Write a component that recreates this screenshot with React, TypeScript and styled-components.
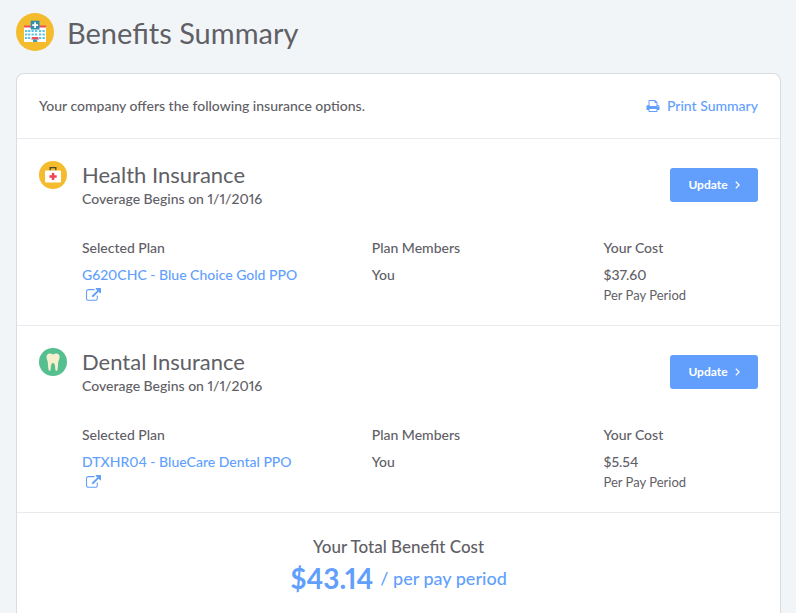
import React from 'react';
import styled, { createGlobalStyle } from 'styled-components';

const colors = {
  page: '#f2f5f8',
  text: '#5f6066',
  blue: '#629ffd',
  border: '#d9dce2',
  rule: '#e8eaed',
  yellow: '#f4bc2c',
  green: '#56bf90',
};

const GlobalStyle = createGlobalStyle`
  *, *::before, *::after { box-sizing: border-box; }
  body {
    margin: 0;
    background: ${colors.page};
    color: ${colors.text};
    font-family: Lato, "Open Sans", sans-serif;
    font-size: 14px;
    font-weight: 500;
    font-variant-numeric: proportional-nums;
    line-height: 20px;
  }
  h1, h2, h3, p, dl, dt, dd { margin: 0; font-weight: 500; }
  svg { display: block; flex: none; }
`;

const Page = styled.main`
  padding: 12px 15px 0 16px;
`;

const PageHeader = styled.header`
  display: flex;
  align-items: center;
  gap: 13px;
  height: 39px;
`;

const PageTitle = styled.h1`
  font-size: 29px;
  font-weight: 400;
  line-height: 36px;
  padding-top: 2px;
`;

const Card = styled.div`
  margin-top: 22px;
  background: #fff;
  border: 1px solid ${colors.border};
  border-bottom: 0;
  border-radius: 8px 8px 0 0;
`;

const Intro = styled.div`
  display: flex;
  align-items: center;
  justify-content: space-between;
  padding: 22px;
  border-bottom: 1px solid ${colors.rule};
`;

const Link = styled.a`
  display: inline-flex;
  align-items: center;
  gap: 7px;
  color: ${colors.blue};
  text-decoration: none;
`;

const PlanLink = styled.a`
  display: block;
  color: ${colors.blue};
  text-decoration: none;

  svg { margin: 3px 0 0 4px; }
`;

const Section = styled.section`
  display: grid;
  grid-template-columns: 28px 1fr;
  column-gap: 15px;
  padding: 22px 22px 20px;
  border-bottom: 1px solid ${colors.rule};
`;

const SectionHeader = styled.div`
  display: flex;
  justify-content: space-between;
  align-items: center;
`;

const SectionTitle = styled.h2`
  font-size: 22px;
  font-weight: 400;
  line-height: 28px;
`;

const UpdateButton = styled.button`
  display: flex;
  align-items: center;
  justify-content: center;
  gap: 7px;
  width: 88px;
  height: 34px;
  padding: 0;
  border: 0;
  border-radius: 3px;
  background: ${colors.blue};
  color: #fff;
  font: 700 12px/20px Lato, "Open Sans", sans-serif;
  cursor: pointer;
`;

const Details = styled.dl`
  grid-column: 2;
  display: grid;
  grid-template-columns: 15fr 12fr 8fr;
  margin-top: 29px;
`;

const Term = styled.dt`
  margin-bottom: 7px;
`;

const Period = styled.small`
  display: block;
  font-size: 13px;
  font-weight: 400;
  line-height: 20px;
`;

const Total = styled.section`
  display: flex;
  flex-direction: column;
  align-items: center;
  padding: 24px 22px 24px;
`;

const TotalTitle = styled.h3`
  font-size: 17px;
  line-height: 20px;
`;

const TotalCost = styled.p`
  display: flex;
  align-items: center;
  gap: 7px;
  margin-top: 3px;
  color: ${colors.blue};
  font-size: 18px;
  line-height: 36px;
`;

const Amount = styled.strong`
  font-size: 28px;
  font-weight: 700;
`;

const HospitalIcon = () => (
  <svg width="38" height="38" viewBox="0 0 38 38" aria-hidden="true">
    <circle cx="19" cy="19" r="19" fill={colors.yellow} />
    <path fill="#fff" d="M8 14h22v15H8z" />
    <path fill="#ef4e5e" d="M8 12.5h22v2H8z" />
    <path fill="#2f8fb0" d="M14.7 7.7h8.8v8.8h-8.8z" />
    <path fill="#fff" d="M18.2 9.3h1.8v2h2v1.8h-2v2h-1.8v-2h-2v-1.8h2z" />
    <g fill="#5cc5dd">
      {[17, 20.5, 24].map((y) =>
        [9, 12, 15.5, 19, 23, 26.5].map((x) =>
          y === 24 && (x === 15.5 || x === 19) ? null : (
            <rect key={`${x}-${y}`} x={x} y={y} width="2.3" height="2" />
          ),
        ),
      )}
    </g>
    <path fill="#ef4e5e" d="M16 24h6.2l.8 2.5h-7.8z" />
    <path fill="#3d9dbb" d="M17 26.3h4.2V29H17z" />
  </svg>
);

const FirstAidIcon = () => (
  <svg width="28" height="28" viewBox="0 0 28 28" aria-hidden="true">
    <circle cx="14" cy="14" r="14" fill={colors.yellow} />
    <path fill="none" stroke="#4b4636" strokeWidth="1.3" d="M11.2 9.5V6.6h5.6v2.9" />
    <rect x="6" y="9.5" width="16" height="12" rx="1" fill="#fff" />
    <path fill="#ef4657" d="M12.8 12h2.5v2.3h2.4v2.5h-2.4V19h-2.5v-2.2h-2.4v-2.5h2.4z" />
  </svg>
);

const ToothIcon = () => (
  <svg width="28" height="28" viewBox="0 0 28 28" aria-hidden="true">
    <circle cx="14" cy="14" r="14" fill={colors.green} />
    <path
      fill="#f5efce"
      d="M10.8 5.5C12.3 5.5 12.8 6.3 14 6.3s1.8-.8 3.3-.8c2 0 3.3 1.4 3.3 3.5 0 1.6-.7 2.7-1.2 4.2-.4 1.5-.3 3.4-.5 5.5-.2 2-.6 4.3-1.6 4.3-1.2 0-1-2.2-1.2-4.2-.2-2-.6-3.8-2.1-3.8s-1.9 1.8-2.1 3.8c-.2 2 0 4.2-1.2 4.2-1 0-1.4-2.3-1.6-4.3-.2-2.1-.1-4-.5-5.5C8.2 11.7 7.5 10.6 7.5 9c0-2.1 1.3-3.5 3.3-3.5z"
    />
  </svg>
);

const PrintIcon = () => (
  <svg width="14" height="14" viewBox="0 0 1792 1792" fill="currentColor" aria-hidden="true">
    <path d="M448 1536h896v-256h-896v256zm0-640h896v-384h-160q-40 0-68-28t-28-68v-160h-640v640zm1152 64q0-26-19-45t-45-19-45 19-19 45 19 45 45 19 45-19 19-45zm128 0v416q0 13-9.5 22.5t-22.5 9.5h-224v160q0 40-28 68t-68 28h-960q-40 0-68-28t-28-68v-160h-224q-13 0-22.5-9.5t-9.5-22.5v-416q0-79 56.5-135.5t135.5-56.5h64v-544q0-40 28-68t68-28h672q40 0 88 20t76 48l152 152q28 28 48 76t20 88v256h64q79 0 135.5 56.5t56.5 135.5z" />
  </svg>
);

const ExternalLinkIcon = () => (
  <svg width="15" height="15" viewBox="0 0 1792 1792" fill="currentColor" aria-hidden="true">
    <path d="M1408 928v320q0 119-84.5 203.5t-203.5 84.5h-832q-119 0-203.5-84.5t-84.5-203.5v-832q0-119 84.5-203.5t203.5-84.5h704q14 0 23 9t9 23v64q0 14-9 23t-23 9h-704q-66 0-113 47t-47 113v832q0 66 47 113t113 47h832q66 0 113-47t47-113v-320q0-14 9-23t23-9h64q14 0 23 9t9 23zm384-864v512q0 26-19 45t-45 19-45-19l-176-176-652 652q-10 10-23 10t-23-10l-114-114q-10-10-10-23t10-23l652-652-176-176q-19-19-19-45t19-45 45-19h512q26 0 45 19t19 45z" />
  </svg>
);

const ChevronIcon = () => (
  <svg width="5" height="8" viewBox="0 0 5 8" fill="none" stroke="currentColor" strokeWidth="1.2" aria-hidden="true">
    <path d="M.8.7 4.2 4 .8 7.3" />
  </svg>
);

interface Benefit {
  name: string;
  coverage: string;
  plan: string;
  members: string;
  cost: string;
  icon: React.ReactNode;
}

const benefits: Benefit[] = [
  {
    name: 'Health Insurance',
    coverage: 'Coverage Begins on 1/1/2016',
    plan: 'G620CHC - Blue Choice Gold PPO',
    members: 'You',
    cost: '$37.60',
    icon: <FirstAidIcon />,
  },
  {
    name: 'Dental Insurance',
    coverage: 'Coverage Begins on 1/1/2016',
    plan: 'DTXHR04 - BlueCare Dental PPO',
    members: 'You',
    cost: '$5.54',
    icon: <ToothIcon />,
  },
];

const BenefitSection = ({ benefit }: { benefit: Benefit }) => (
  <Section>
    {benefit.icon}
    <SectionHeader>
      <div>
        <SectionTitle>{benefit.name}</SectionTitle>
        <p>{benefit.coverage}</p>
      </div>
      <UpdateButton type="button">
        Update
        <ChevronIcon />
      </UpdateButton>
    </SectionHeader>
    <Details>
      <div>
        <Term>Selected Plan</Term>
        <dd>
          <PlanLink href="#plan">
            {benefit.plan}
            <ExternalLinkIcon />
          </PlanLink>
        </dd>
      </div>
      <div>
        <Term>Plan Members</Term>
        <dd>{benefit.members}</dd>
      </div>
      <div>
        <Term>Your Cost</Term>
        <dd>
          {benefit.cost}
          <Period>Per Pay Period</Period>
        </dd>
      </div>
    </Details>
  </Section>
);

export default function App() {
  return (
    <>
      <GlobalStyle />
      <Page>
        <PageHeader>
          <HospitalIcon />
          <PageTitle>Benefits Summary</PageTitle>
        </PageHeader>
        <Card>
          <Intro>
            <p>Your company offers the following insurance options.</p>
            <Link href="#print">
              <PrintIcon />
              Print Summary
            </Link>
          </Intro>
          {benefits.map((benefit) => (
            <BenefitSection key={benefit.name} benefit={benefit} />
          ))}
          <Total>
            <TotalTitle>Your Total Benefit Cost</TotalTitle>
            <TotalCost>
              <Amount>$43.14</Amount>
              <span>/ per pay period</span>
            </TotalCost>
          </Total>
        </Card>
      </Page>
    </>
  );
}
